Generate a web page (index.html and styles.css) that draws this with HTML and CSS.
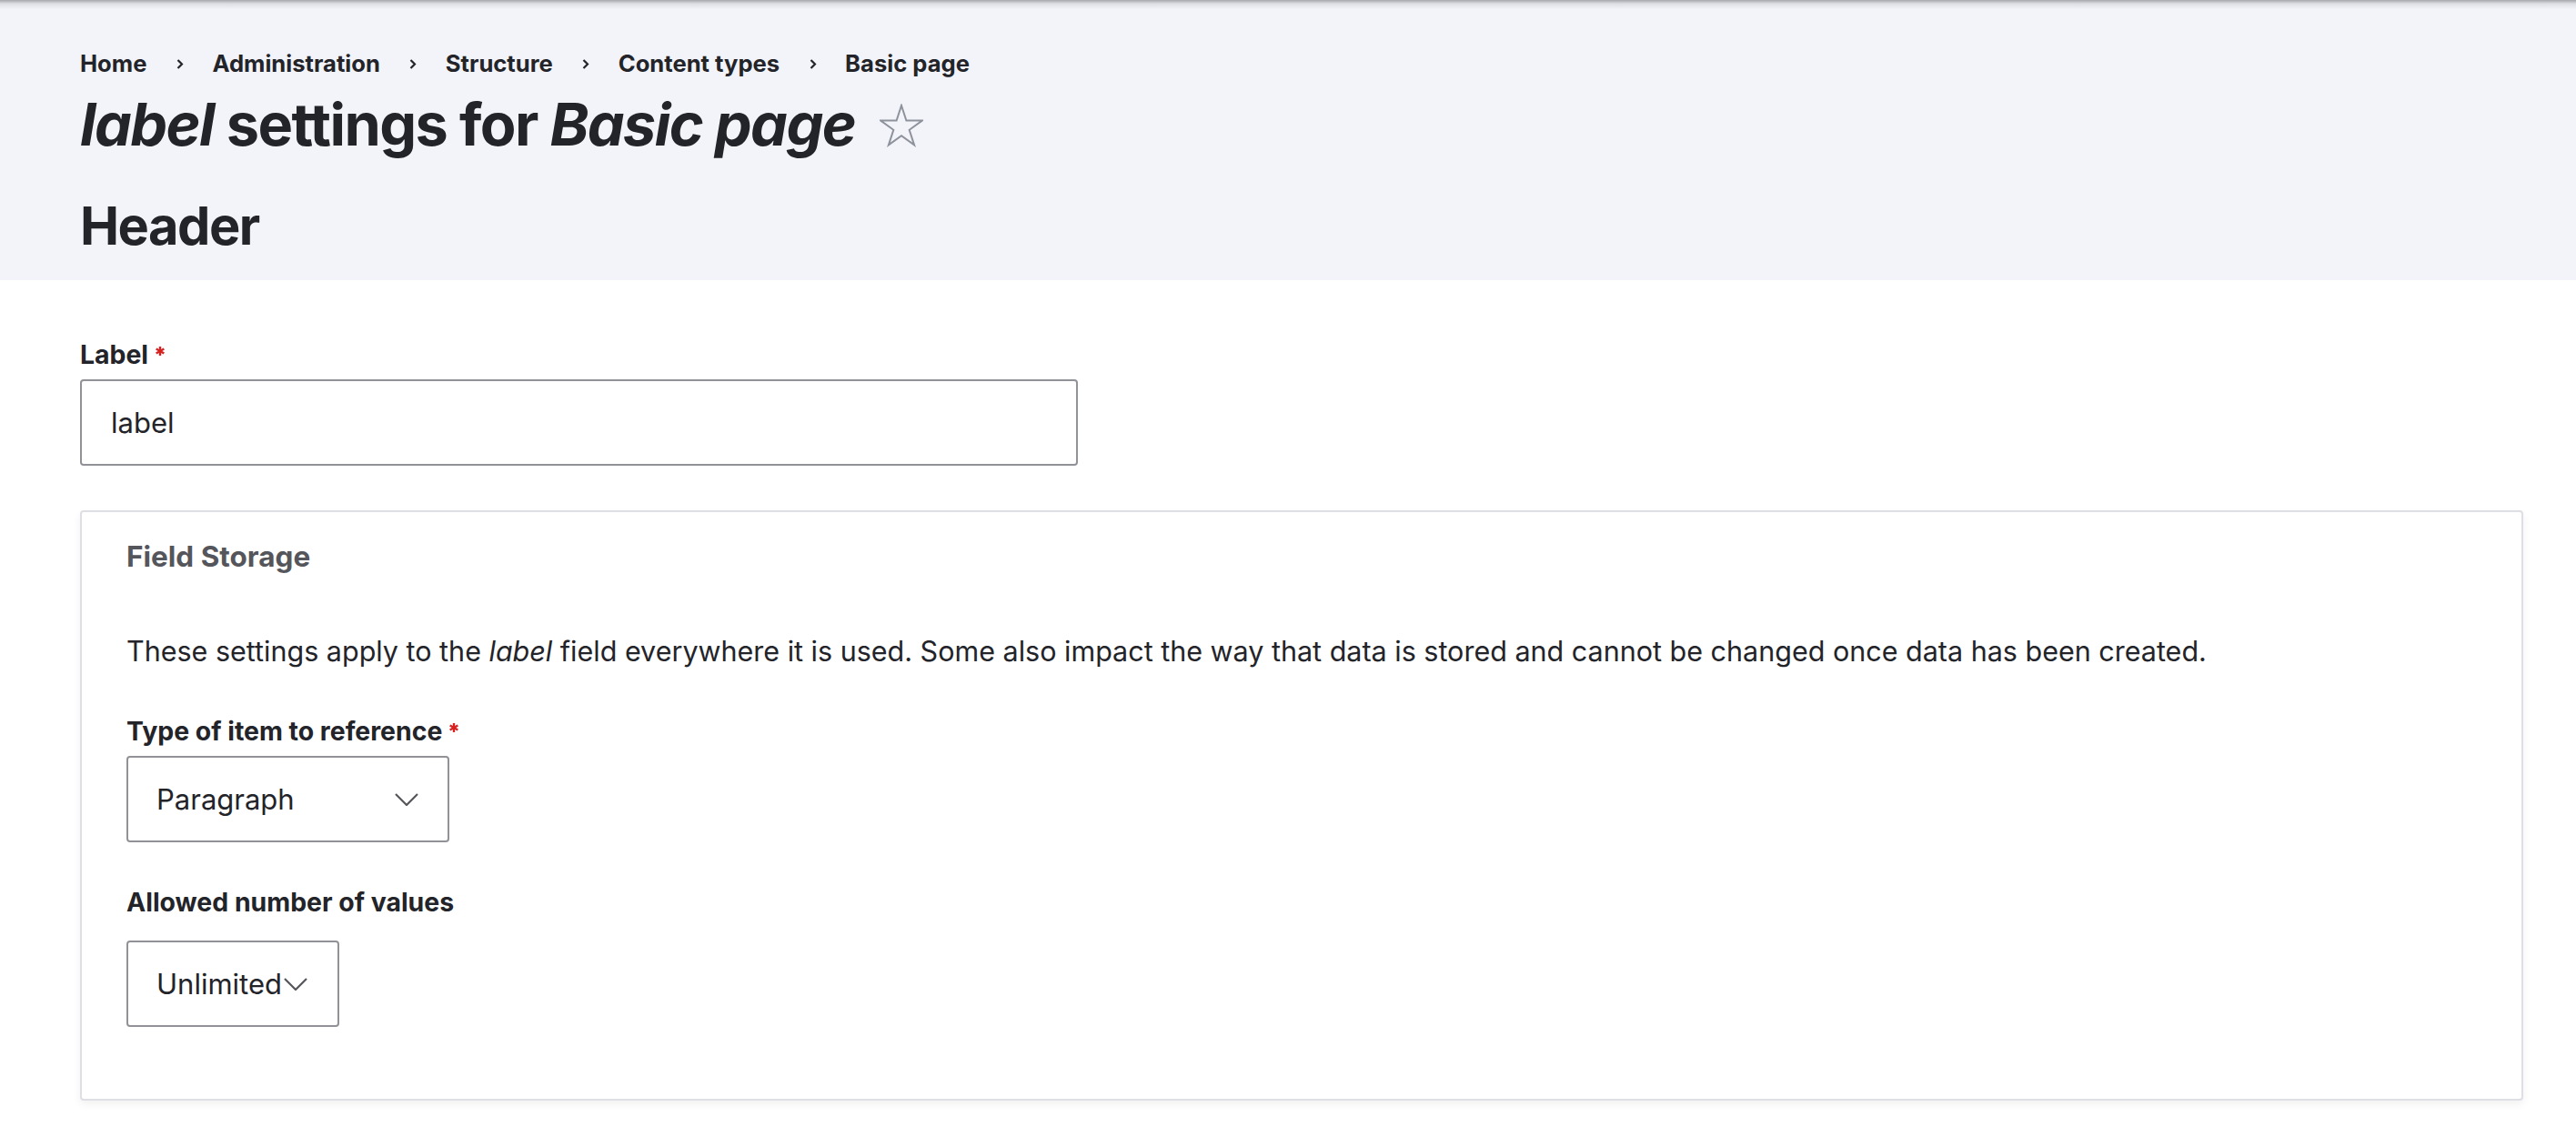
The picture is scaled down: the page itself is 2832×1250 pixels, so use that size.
FILE: index.html
```html
<!DOCTYPE html>
<html lang="en">
<head>
<meta charset="utf-8">
<title>label settings for Basic page</title>
<link rel="stylesheet" href="styles.css">
</head>
<body>
<header class="page-header">
  <nav class="breadcrumb">
    <a class="crumb">Home</a>
    <svg class="sep" viewBox="0 0 8 11" width="8" height="11"><polyline points="1.5,1 6,5.5 1.5,10" fill="none" stroke="#232429" stroke-width="2.2"/></svg>
    <a class="crumb">Administration</a>
    <svg class="sep" viewBox="0 0 8 11" width="8" height="11"><polyline points="1.5,1 6,5.5 1.5,10" fill="none" stroke="#232429" stroke-width="2.2"/></svg>
    <a class="crumb">Structure</a>
    <svg class="sep" viewBox="0 0 8 11" width="8" height="11"><polyline points="1.5,1 6,5.5 1.5,10" fill="none" stroke="#232429" stroke-width="2.2"/></svg>
    <a class="crumb">Content types</a>
    <svg class="sep" viewBox="0 0 8 11" width="8" height="11"><polyline points="1.5,1 6,5.5 1.5,10" fill="none" stroke="#232429" stroke-width="2.2"/></svg>
    <a class="crumb">Basic page</a>
  </nav>
  <h1 class="page-title"><em>label</em> settings for <em>Basic page</em><svg class="star" viewBox="-1 -1 48 49" width="48" height="49"><polygon points="23,1 28.4,17.6 45.8,17.6 31.7,27.8 37.1,44.4 23,34.2 8.9,44.4 14.3,27.8 0.2,17.6 17.6,17.6" fill="none" stroke="#8e929c" stroke-width="2" stroke-linejoin="miter"/></svg></h1>
  <h2 class="section-title">Header</h2>
</header>
<main class="content">
  <div class="form-item form-item--first">
    <label class="form-label">Label<svg class="req" viewBox="0 0 10 10" width="10" height="10"><g stroke="#d72222" stroke-width="2.4"><line x1="5" y1="0" x2="5" y2="10"/><line x1="0.7" y1="2.5" x2="9.3" y2="7.5"/><line x1="0.7" y1="7.5" x2="9.3" y2="2.5"/></g></svg></label>
    <input class="text-input" type="text" value="label">
  </div>
  <section class="card">
    <h3 class="card-title">Field Storage</h3>
    <p class="desc">These settings apply to the <em>label</em> field everywhere it is used. Some also impact the way that data is stored and cannot be changed once data has been created.</p>
    <div class="form-item form-item--type">
      <label class="form-label">Type of item to reference<svg class="req" viewBox="0 0 10 10" width="10" height="10"><g stroke="#d72222" stroke-width="2.4"><line x1="5" y1="0" x2="5" y2="10"/><line x1="0.7" y1="2.5" x2="9.3" y2="7.5"/><line x1="0.7" y1="7.5" x2="9.3" y2="2.5"/></g></svg></label>
      <div class="select select--type">
        <span class="select-value">Paragraph</span>
        <svg class="chev" viewBox="0 0 26 14" width="26" height="14"><polyline points="1,1 13,13 25,1" fill="none" stroke="#55565b" stroke-width="2.2"/></svg>
      </div>
    </div>
    <div class="form-item form-item--count">
      <div class="form-label">Allowed number of values</div>
      <div class="select select--count">
        <span class="select-value">Unlimited</span>
        <svg class="chev" viewBox="0 0 26 14" width="26" height="14"><polyline points="1,1 13,13 25,1" fill="none" stroke="#55565b" stroke-width="2.2"/></svg>
      </div>
    </div>
  </section>
</main>
</body>
</html>
```
FILE: styles.css
```css
* { box-sizing: border-box; }

html, body {
  margin: 0;
  padding: 0;
  background: #ffffff;
}

body {
  font-family: Inter, "Noto Sans", "Liberation Sans", sans-serif;
  color: #232429;
  min-height: 1250px;
}

.page-header {
  background: linear-gradient(to bottom, rgba(60, 60, 70, 0.42) 0, rgba(60, 60, 70, 0.12) 4px, rgba(60, 60, 70, 0) 10px), #f3f4f9;
  padding: 54px 58px 24px 88px;
}

.breadcrumb {
  display: flex;
  align-items: center;
  height: 32px;
  font-size: 25.6px;
  line-height: 32px;
  font-weight: 700;
}

.crumb {
  color: #232429;
  text-decoration: none;
}

.sep {
  margin: 0 31.5px 0 32.5px;
  flex: none;
}

.page-title {
  margin: 11.5px 0 0;
  font-size: 64.8px;
  line-height: 77.8px;
  font-weight: 700;
  letter-spacing: -1.6px;
}

.page-title em {
  font-style: italic;
}

.star {
  margin-left: 27px;
  vertical-align: -3px;
}

.section-title {
  margin: 39px 0 0;
  font-size: 57.7px;
  line-height: 69.2px;
  font-weight: 700;
  letter-spacing: -1.5px;
}

.content {
  padding: 0 58px 40px 88px;
}

.form-item--first {
  margin-top: 64.7px;
}

.form-label {
  display: block;
  font-size: 28.4px;
  line-height: 36px;
  font-weight: 700;
  color: #232429;
}

.req {
  margin-left: 8px;
  vertical-align: 9px;
}

.text-input {
  display: block;
  margin-top: 9.3px;
  width: 1097px;
  height: 95px;
  padding: 0 32px;
  border: 2px solid #919297;
  border-radius: 4px;
  background: #fff;
  font-family: inherit;
  font-size: 31px;
  color: #232429;
  outline: none;
}

.card {
  margin-top: 49px;
  border: 2px solid #dedfe4;
  border-radius: 4px;
  background: #fff;
  box-shadow: 0 4px 10px rgba(0, 0, 0, 0.06);
  padding: 30.7px 49px 79px;
}

.card-title {
  margin: 0;
  font-size: 31.5px;
  line-height: 36px;
  font-weight: 700;
  color: #55565b;
}

.desc {
  margin: 68px 0 0;
  font-size: 30.5px;
  line-height: 36px;
  font-weight: 400;
}

.desc em {
  font-style: italic;
}

.form-item--type {
  margin-top: 52px;
}

.form-item--count {
  margin-top: 47.7px;
}

.select {
  display: flex;
  align-items: center;
  justify-content: space-between;
  height: 95px;
  border: 2px solid #919297;
  border-radius: 4px;
  background: #fff;
  padding: 0 32px 0 31px;
  font-size: 31px;
  line-height: 38px;
}

.select--type {
  margin-top: 9.3px;
  width: 355px;
}

.select--count {
  margin-top: 24.3px;
  width: 234px;
  padding-right: 33px;
}

.chev {
  flex: none;
}
```
